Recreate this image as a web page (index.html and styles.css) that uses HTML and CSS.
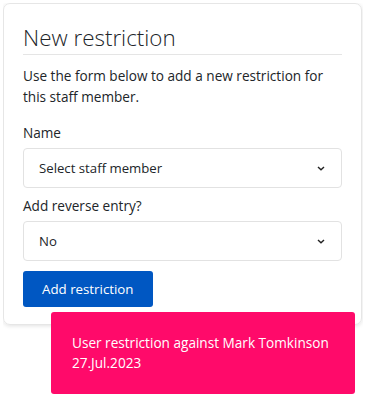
FILE: index.html
```html
<html lang="en">
  <head>
    <meta charset="UTF-8" />
    <title>New restriction</title>
    <link rel="stylesheet" href="styles.css">
  </head>
  <body>
    <div class="card">
      <h1>New restriction</h1>
      <p class="intro">
        Use the form below to add a new restriction for this staff member.
      </p>

      <form class="form">
        <label class="field-label">Name</label>
        <div class="select">
          <span>Select staff member</span>
          <svg class="chevron" width="8" height="5" viewBox="0 0 8 5">
            <path d="M1 1l3 2.8L7 1" fill="none" stroke="#222" stroke-width="1.4" />
          </svg>
        </div>

        <label class="field-label">Add reverse entry?</label>
        <div class="select">
          <span>No</span>
          <svg class="chevron" width="8" height="5" viewBox="0 0 8 5">
            <path d="M1 1l3 2.8L7 1" fill="none" stroke="#222" stroke-width="1.4" />
          </svg>
        </div>

        <button type="button" class="btn">Add restriction</button>
      </form>
    </div>

    <div class="toast">
      User restriction against Mark Tomkinson<br />
      27.Jul.2023
    </div>
  </body>
</html>
```

FILE: styles.css
```css
body {
  margin: 3px;
  background-color: #fff;
  color: #212529;
  font-family: "Open Sans", "Noto Sans", sans-serif;
  font-size: 13.6px;
}

.card {
  width: 359px;
  box-sizing: border-box;
  padding: 20px 19px 17px 19px;
  border: 1px solid #e6e6e6;
  border-radius: 7px;
  box-shadow: 0 1px 4px rgba(0, 0, 0, 0.12);
}

h1 {
  margin: 0;
  padding-bottom: 2px;
  border-bottom: 1px solid #e5e5e5;
  font-size: 22.4px;
  font-weight: 300;
  line-height: 28px;
}

.intro {
  margin: 10px 0 15px;
  line-height: 21px;
}

.form {
  margin: 0;
}

.field-label {
  display: block;
  margin-bottom: 5px;
  line-height: 21px;
}

.select {
  display: flex;
  align-items: center;
  justify-content: space-between;
  height: 40px;
  box-sizing: border-box;
  margin-bottom: 7px;
  padding: 0 16px 0 15px;
  border: 1px solid #e2e2e2;
  border-radius: 4px;
  font-size: 13.2px;
}

.btn {
  display: block;
  margin-top: 10px;
  height: 36px;
  padding: 0 19px;
  border: none;
  border-radius: 3px;
  background-color: #0057c2;
  color: #fff;
  font-family: inherit;
  font-size: 13.3px;
}

.toast {
  position: absolute;
  left: 51px;
  top: 312px;
  width: 304px;
  height: 82px;
  box-sizing: border-box;
  padding: 21px 21px 20px;
  border-radius: 3px;
  background-color: #ff0a6a;
  color: #fff;
  font-size: 13.6px;
  line-height: 20px;
}
```
